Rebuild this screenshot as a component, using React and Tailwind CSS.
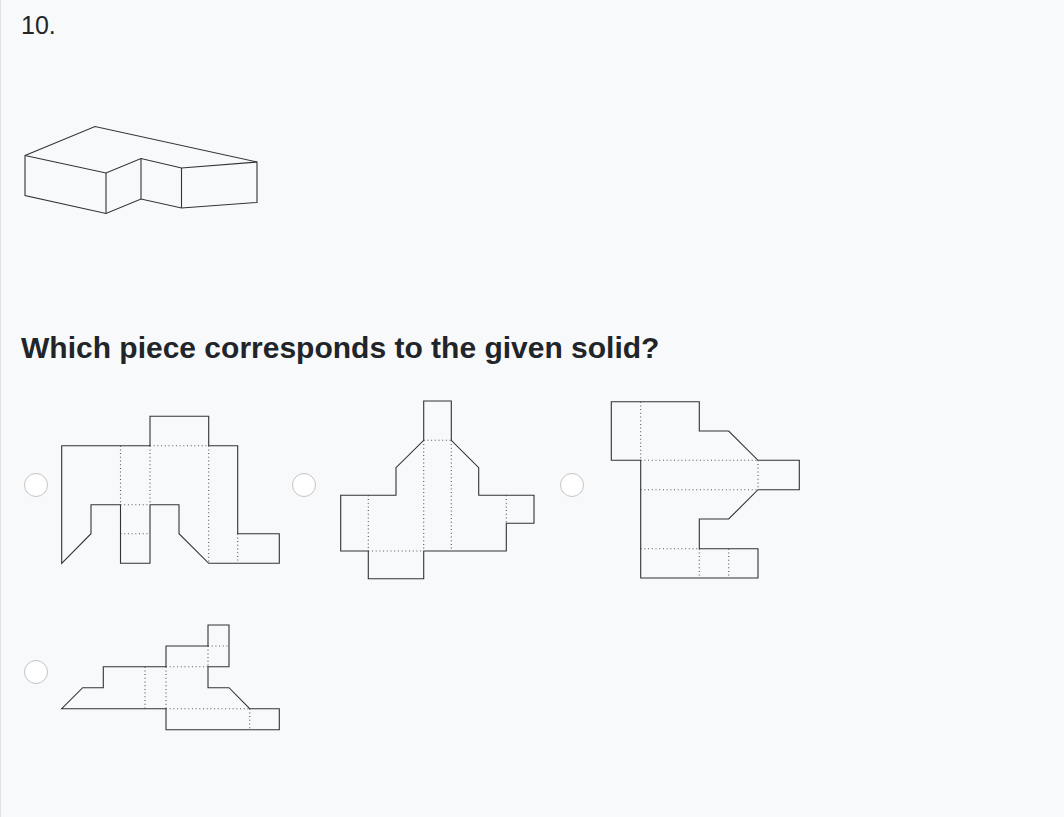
import React from 'react';

// outline + fold lines for every net, coordinates are local to each svg box
const options = [
    {
        box: [60, 395, 222, 190],
        outline: '61.7,445.7 150,445.7 150,416.3 208.7,416.3 208.7,445.7 237.7,445.7 237.7,533.7 279.3,533.7 279.3,563.3 208.7,563.3 179,533.7 179,504.7 150,504.7 150,563.3 120.5,563.3 120.5,504.7 91,504.7 91,533.7 61.7,563.3',
        folds: [
            [120.5, 445.7, 120.5, 504.7],
            [150, 445.7, 150, 504.7],
            [150, 445.7, 208.7, 445.7],
            [208.7, 445.7, 208.7, 563.3],
            [120.5, 504.7, 150, 504.7],
            [120.5, 533.7, 150, 533.7],
            [237.7, 533.7, 237.7, 563.3],
        ],
    },
    {
        box: [328, 395, 222, 190],
        outline: '423.7,401 451.3,401 451.3,440.3 478.7,467.7 478.7,495.3 534,495.3 534,523.3 506.3,523.3 506.3,551 423.7,551 423.7,578.7 368.3,578.7 368.3,551 340.7,551 340.7,495.3 396,495.3 396,467.7 423.7,440.3',
        folds: [
            [423.7, 440.3, 451.3, 440.3],
            [423.7, 440.3, 423.7, 551],
            [451.3, 440.3, 451.3, 551],
            [368.3, 495.3, 368.3, 551],
            [368.3, 551, 423.7, 551],
            [506.3, 495.3, 506.3, 523.3],
        ],
    },
    {
        box: [596, 395, 222, 190],
        outline: '611.3,401.7 699.3,401.7 699.3,431 728.7,431 758,460.3 799.3,460.3 799.3,489.7 758,489.7 728.7,519 699.3,519 699.3,548.7 758,548.7 758,578 640.7,578 640.7,460.3 611.3,460.3',
        folds: [
            [640.7, 401.7, 640.7, 460.3],
            [640.7, 460.3, 758, 460.3],
            [758, 460.3, 758, 489.7],
            [640.7, 489.7, 758, 489.7],
            [640.7, 548.7, 699.3, 548.7],
            [699.3, 548.7, 699.3, 578],
            [728.7, 548.7, 728.7, 578],
        ],
    },
    {
        box: [60, 615, 222, 125],
        outline: '208,625 229,625 229,666.7 208,666.7 208,687.7 229,687.7 249.7,708.7 279.3,708.7 279.3,729.7 166,729.7 166,708.7 61.7,708.7 82.7,687.7 103.3,687.7 103.3,666.7 166,666.7 166,646 208,646',
        folds: [
            [208, 646, 229, 646],
            [208, 646, 208, 666.7],
            [166, 666.7, 208, 666.7],
            [145, 666.7, 145, 708.7],
            [166, 666.7, 166, 708.7],
            [166, 708.7, 249.7, 708.7],
            [249.7, 708.7, 249.7, 729.7],
        ],
    },
];

const Net = ({ box, outline, folds }) => (
    <svg width={box[2]} height={box[3]} viewBox={box.join(' ')} fill="none" className="block shrink-0">
        {folds.map(([x1, y1, x2, y2], i) => (
            <line key={i} x1={x1} y1={y1} x2={x2} y2={y2} stroke="#555" strokeWidth="1.1" strokeDasharray="1 2.7" />
        ))}
        <polygon points={outline} stroke="#333" strokeWidth="1.1" />
    </svg>
);

const App = () => {
    return (
        <div className="min-h-[817px] bg-[#f8f9fb] border-l border-[#dee2e6] text-[#212529] font-['Liberation_Sans',Arial,sans-serif]">
            <div className="pt-[9px] pl-5">
                <div className="text-[25px] leading-[32px]">10.</div>

                {/* solid */}
                <svg width="240" height="92" viewBox="22 124 240 92" fill="none" className="block mt-[83px] ml-[1px]" stroke="#333" strokeWidth="1.1">
                    <polygon points="25,155.5 95,126.5 257,162 257,202.5 181.5,208 141,199 106,213.5 25,195.5" />
                    <polyline points="25,155.5 106,173 141,158.5 181.5,168 257,162" />
                    <line x1="106" y1="173" x2="106" y2="213.5" />
                    <line x1="141" y1="158.5" x2="141" y2="199" />
                    <line x1="181.5" y1="168" x2="181.5" y2="208" />
                </svg>

                <h2 className="mt-[114px] text-[30px] leading-[36px] font-bold">Which piece corresponds to the given solid?</h2>
            </div>

            {/* answers */}
            <div className="mt-[29px] pl-[23px] flex flex-wrap gap-y-[30px]">
                {options.map((opt, i) => (
                    <label key={i} className="flex items-center gap-3 mr-[10px]">
                        <span className="block w-6 h-6 mb-[11px] rounded-full bg-white border border-[#c4c4c4] shrink-0" />
                        <Net {...opt} />
                    </label>
                ))}
            </div>
        </div>
    );
};

export default App;
